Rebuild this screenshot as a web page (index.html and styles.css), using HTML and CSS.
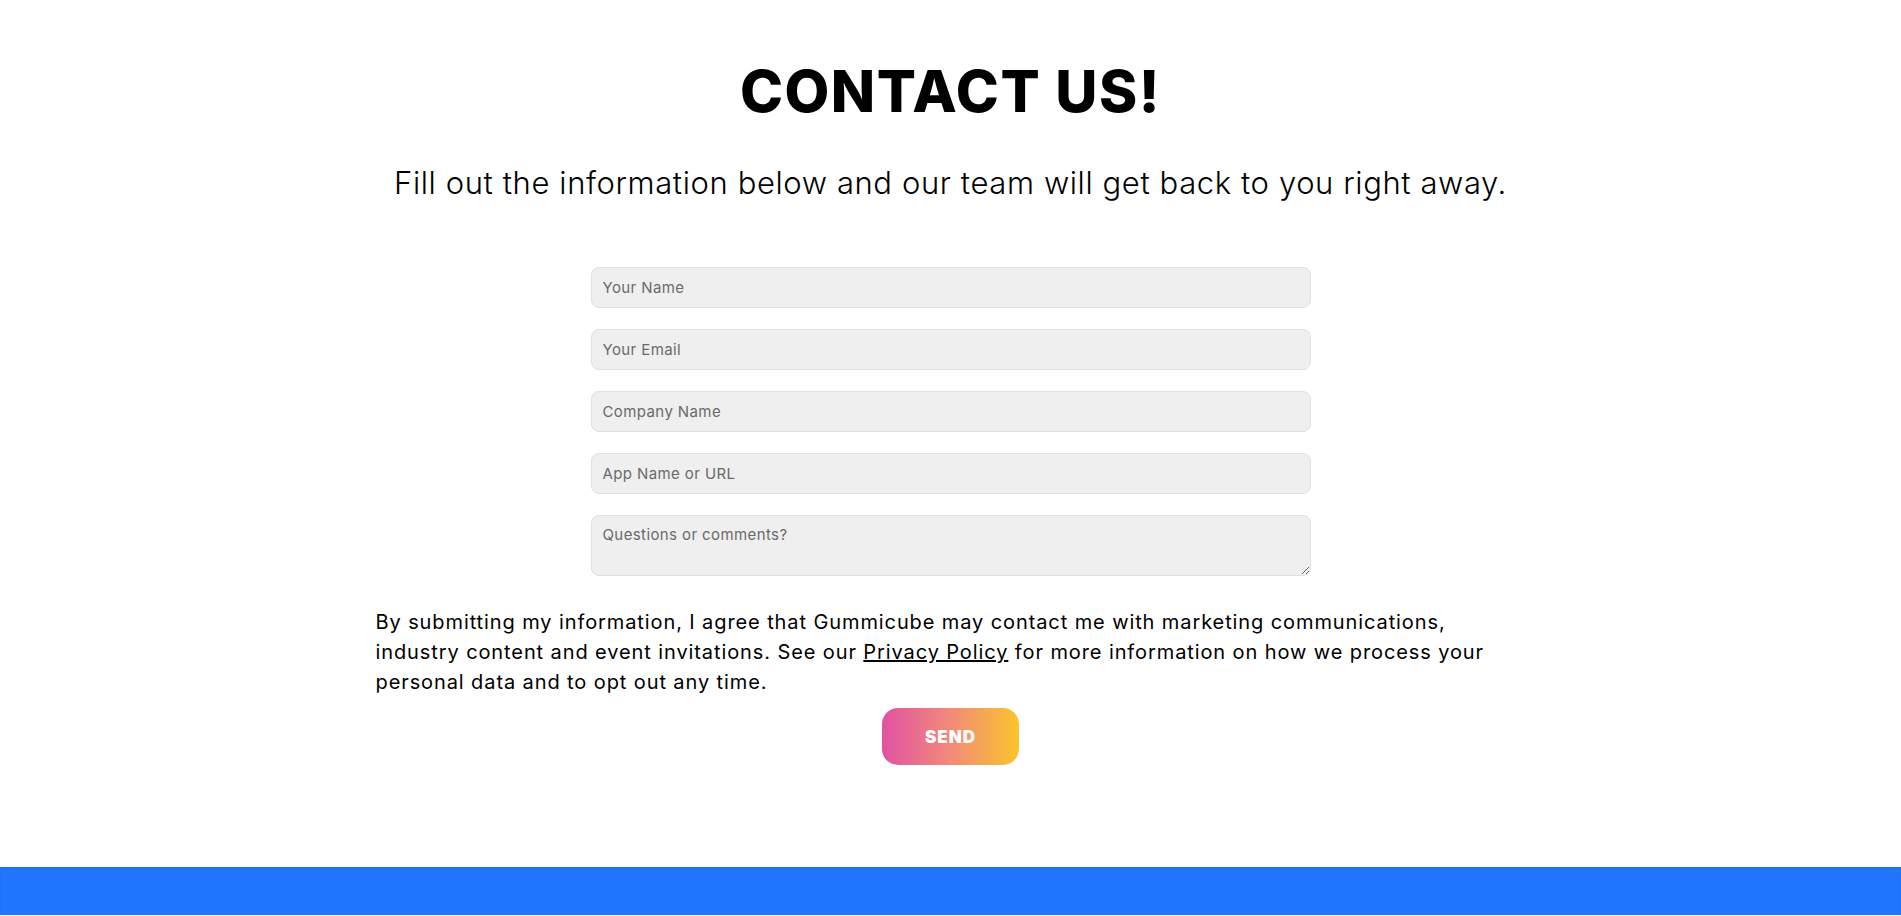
FILE: index.html
```html
<!DOCTYPE html>
<html lang="en">
<head>
<meta charset="UTF-8">
<title>Contact Us</title>
<link rel="stylesheet" href="styles.css">
</head>
<body>

<section class="contact">
    <h1 class="contact-title">CONTACT US!</h1>
    <p class="contact-lead">Fill out the information below and our team will get back to you right away.</p>

    <!-- contact form -->
    <form class="contact-form" onsubmit="return false;">
        <input type="text" class="field" placeholder="Your Name">
        <input type="email" class="field" placeholder="Your Email">
        <input type="text" class="field" placeholder="Company Name">
        <input type="text" class="field" placeholder="App Name or URL">
        <textarea class="field field-area" placeholder="Questions or comments?"></textarea>
    </form>

    <p class="consent">By submitting my information, I agree that Gummicube may contact me with marketing communications, industry content and event invitations. See our <a href="#">Privacy Policy</a> for more information on how we process your personal data and to opt out any time.</p>

    <button class="send-btn" type="button">SEND</button>
</section>

<footer class="site-footer"></footer>

</body>
</html>
```

FILE: styles.css
```css
body {
    margin: 0;
    font-family: Inter, "Open Sans", sans-serif;
    color: #000;
    background: #fff;
}
.contact {
    display: flex;
    flex-direction: column;
    align-items: center;
    padding: 54px 0 102px;
}
.contact-title {
    margin: 0;
    font-size: 58px;
    line-height: 74px;
    font-weight: 800;
    letter-spacing: 1.5px;
}
.contact-lead {
    margin: 35px 0 0;
    font-size: 31px;
    line-height: 40px;
    font-weight: 300;
    letter-spacing: 0.6px;
}
.contact-form {
    width: 720px;
    margin-top: 64px;
    display: flex;
    flex-direction: column;
    gap: 21px;
}
.field {
    box-sizing: border-box;
    width: 100%;
    height: 41px;
    padding: 0 11px;
    border: 1px solid #e0e0e0;
    border-radius: 8px;
    background: #efefef;
    font-family: inherit;
    font-size: 15px;
    letter-spacing: 0.4px;
    color: #333;
    outline: none;
}
.field::placeholder {
    color: #6a6a6a;
}
.field-area {
    height: 61px;
    padding: 9px 11px;
    resize: vertical;
}
.consent {
    width: 1140px;
    margin: 31px 0 0 -10px;
    font-size: 20px;
    line-height: 30px;
    letter-spacing: 0.9px;
}
.consent a {
    color: #000;
    text-decoration: underline;
}
.send-btn {
    margin-top: 11px;
    width: 137px;
    height: 57px;
    border: none;
    border-radius: 16px;
    background: linear-gradient(90deg, #e052a2, #f28a7a 50%, #fbc42a);
    color: #fff;
    font-family: inherit;
    font-size: 17px;
    font-weight: 900;
    letter-spacing: 1px;
    cursor: pointer;
}
.site-footer {
    height: 48px;
    background: #2176ff;
    box-shadow: inset 0 1px 2px rgba(30, 80, 180, 0.3);
}
```
